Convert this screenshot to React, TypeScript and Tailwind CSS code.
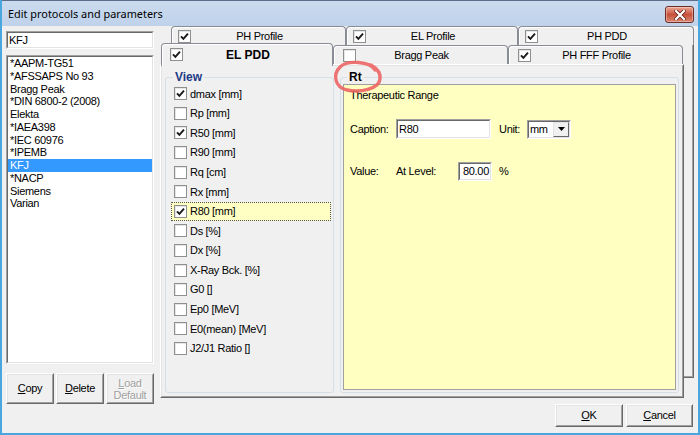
import React from 'react';

const F = "font-['Liberation_Sans',Arial,sans-serif]";

const Tick = () => (
  <svg width="9" height="9" viewBox="0 0 9 9" className="block">
    <path d="M1 4.3 L3.4 6.9 L8 1.6" stroke="#1a1a1a" strokeWidth="1.9" fill="none" />
  </svg>
);

function Box({ checked }: { checked?: boolean }) {
  return (
    <span className="w-[13px] h-[13px] shrink-0 border border-[#8e8f8f] bg-white flex items-center justify-center shadow-[inset_1px_1px_0_#e6e6e6]">
      {checked ? <Tick /> : null}
    </span>
  );
}

function Sunken({ className = '', inner = '', children }: { className?: string; inner?: string; children?: React.ReactNode }) {
  return (
    <div className={`border border-t-[#a0a0a0] border-l-[#a0a0a0] border-b-white border-r-white ${className}`}>
      <div className={`h-full w-full border border-t-[#696969] border-l-[#696969] border-b-[#e3e3e3] border-r-[#e3e3e3] bg-white ${inner}`}>{children}</div>
    </div>
  );
}

function Btn({ className = '', children }: { className?: string; children?: React.ReactNode }) {
  return (
    <div className={`border border-t-white border-l-white border-b-[#696969] border-r-[#696969] ${className}`}>
      <div className="h-full w-full border border-t-[#e3e3e3] border-l-[#e3e3e3] border-b-[#a0a0a0] border-r-[#a0a0a0] bg-[#f0f0f0] flex flex-col items-center justify-center">
        {children}
      </div>
    </div>
  );
}

function BackTab({ label, checked, w }: { label: string; checked?: boolean; w: string }) {
  return (
    <div className={`${w} h-[19px] border border-b-0 border-[#898c95] rounded-t-[4px] bg-[#f0f0f0] shadow-[inset_1px_1px_0_#ffffff] flex items-center`}>
      <span className="ml-[6px]"><Box checked={checked} /></span>
      <span className="flex-1 text-center">{label}</span>
      <span className="w-[17px] shrink-0" />
    </div>
  );
}

function FrontTab({ label, checked, w }: { label: string; checked?: boolean; w: string }) {
  return (
    <div className={`${w} h-[19px] border border-b-0 border-[#898c95] rounded-t-[4px] bg-[#f0f0f0] shadow-[inset_1px_1px_0_#ffffff] flex items-center`}>
      <span className="ml-[9px]"><Box checked={checked} /></span>
      <span className="flex-1 text-center">{label}</span>
      <span className="w-[20px] shrink-0" />
    </div>
  );
}

const listItems = [
  '*AAPM-TG51',
  '*AFSSAPS No 93',
  'Bragg Peak',
  '*DIN 6800-2 (2008)',
  'Elekta',
  '*IAEA398',
  '*IEC 60976',
  '*IPEMB',
  'KFJ',
  '*NACP',
  'Siemens',
  'Varian',
];

const checks: [string, boolean][] = [
  ['dmax [mm]', true],
  ['Rp [mm]', false],
  ['R50 [mm]', true],
  ['R90 [mm]', false],
  ['Rq [cm]', false],
  ['Rx [mm]', false],
  ['R80 [mm]', true],
  ['Ds [%]', false],
  ['Dx [%]', false],
  ['X-Ray Bck. [%]', false],
  ['G0 []', false],
  ['Ep0 [MeV]', false],
  ['E0(mean) [MeV]', false],
  ['J2/J1 Ratio []', false],
];

export default function App() {
  return (
    <div className={`relative w-[700px] h-[435px] flex flex-col bg-[#f0f0f0] ${F} text-[11px] tracking-[-0.3px] text-black border-l-2 border-r-2 border-b-2 border-l-[#4aa6de] border-r-[#4aa6de] border-b-[#4aa6de] overflow-hidden`}>
      {/* Title bar */}
      <div className="h-[26px] shrink-0 -mx-[2px] flex items-start bg-gradient-to-b from-[#cbdbef] to-[#bfd2ea] border-t border-l border-[#5b6f8a]">
        <div className="flex-1 pl-[7px] pt-[5px] font-['Noto_Sans',sans-serif] text-[10.9px] tracking-normal leading-[16px] text-black">
          Edit protocols and parameters
        </div>
        <div className="mt-[5px] mr-[6px] w-[29px] h-[17px] rounded-[3px] border border-[#6e2c22] bg-gradient-to-b from-[#e9a897] via-[#c7503b] to-[#d98570] flex items-center justify-center shadow-[inset_0_0_0_1px_rgba(255,255,255,0.35)]">
          <svg width="12" height="10" viewBox="0 0 12 10">
            <path d="M2 1 L10 9 M10 1 L2 9" stroke="#5a1d14" strokeWidth="3.6" strokeLinecap="square" />
            <path d="M2 1 L10 9 M10 1 L2 9" stroke="#ffffff" strokeWidth="2.2" strokeLinecap="square" />
          </svg>
        </div>
      </div>

      {/* Client */}
      <div className="flex-1 flex">
        {/* Left column */}
        <div className="ml-[4px] w-[148px] flex flex-col">
          <Sunken className="mt-[5px] h-[18px]" inner="flex items-center pl-[1px] leading-[13px]">
            KFJ
          </Sunken>
          <Sunken className="mt-[6px] h-[309px]">
            <div className="flex flex-col">
              {listItems.map((it) => (
                <div
                  key={it}
                  className={`h-[12.75px] leading-[13px] pl-[2px] whitespace-nowrap ${it === 'KFJ' ? 'bg-[#3399ff] text-white' : ''}`}
                >
                  {it}
                </div>
              ))}
            </div>
          </Sunken>
          <div className="mt-[9px] flex gap-[2px]">
            <Btn className="w-[48px] h-[31px]">
              <span><span className="underline">C</span>opy</span>
            </Btn>
            <Btn className="w-[48px] h-[31px]">
              <span><span className="underline">D</span>elete</span>
            </Btn>
            <Btn className="w-[48px] h-[31px]">
              <span className="text-[#a0a0a0] leading-[12px] text-center [text-shadow:1px_1px_0_#ffffff]">
                <span className="underline">L</span>oad
                <br />
                Default
              </span>
            </Btn>
          </div>
        </div>

        {/* Right area */}
        <div className="ml-[6px] w-[534px] flex flex-col">
          {/* back row */}
          <div className="pl-[11px] flex">
            <BackTab label="PH Profile" checked w="w-[175px]" />
            <BackTab label="EL Profile" checked w="w-[172px]" />
            <BackTab label="PH PDD" checked w="w-[176px]" />
          </div>
          <div className="flex">
            <div className="w-[524px] flex flex-col">
              {/* front row */}
              <div className="pl-[1px] flex items-end h-[19px]">
                <div className="relative z-10 w-[172px] h-[23px] -mb-[2px] border border-b-0 border-[#898c95] rounded-t-[4px] bg-[#f0f0f0] shadow-[inset_1px_1px_0_#ffffff] flex items-start pt-[4px]">
                  <span className="ml-[8px]"><Box checked /></span>
                  <span className="flex-1 text-center text-[12px] font-bold tracking-normal leading-[14px]">EL PDD</span>
                  <span className="w-[19px] shrink-0" />
                </div>
                <FrontTab label="Bragg Peak" w="w-[175px]" />
                <FrontTab label="PH FFF Profile" checked w="w-[175px]" />
              </div>
              {/* panel */}
              <div className="h-[334px] border border-t-white border-l-white border-b-[#696969] border-r-[#696969]">
                <div className="h-full border border-t-[#e3e3e3] border-l-[#e3e3e3] border-b-[#a0a0a0] border-r-[#a0a0a0] flex pt-[4px] pb-[3px] pl-[3px] pr-[3px] gap-[6px]">
                  <fieldset className="w-[169px] min-w-0 border border-[#d5dfe5] rounded-[3px]">
                    <legend className="ml-[7px] px-[2px] text-[12px] font-bold tracking-normal leading-[14px] text-[#1d3a86]">View</legend>
                    <div className="flex flex-col">
                      {checks.map(([label, c]) => (
                        <div
                          key={label}
                          className={`ml-[5px] w-[160px] h-[19.6px] flex items-center pl-[3px] gap-[3px] whitespace-nowrap ${label === 'R80 [mm]' ? 'bg-[#ffffc4] outline-1 outline-dotted -outline-offset-1 outline-[#555555]' : ''}`}
                        >
                          <Box checked={c} />
                          <span>{label}</span>
                        </div>
                      ))}
                    </div>
                  </fieldset>
                  <fieldset className="flex-1 min-w-0 border border-[#d5dfe5] rounded-[3px] flex flex-col">
                    <legend className="ml-[6px] px-[2px] text-[12px] font-bold tracking-normal leading-[14px] text-black">Rt</legend>
                    <div className="mx-[2px] mb-[2px] flex-1 border border-[#a0a0a0] bg-[#ffffc2] flex flex-col pl-[6px] h-[306px]">
                      <div className="pt-[4px] leading-[13px]">Therapeutic Range</div>
                      <div className="mt-[17px] h-[20px] flex items-center">
                        <span className="w-[46px]">Caption:</span>
                        <Sunken className="w-[95px] h-[20px]" inner="flex items-center pl-[1px]">R80</Sunken>
                        <span className="ml-[8px] w-[28px]">Unit:</span>
                        <Sunken className="w-[44px] h-[19px]" inner="flex items-stretch">
                          <span className="flex-1 flex items-center pl-[1px]">mm</span>
                          <div className="w-[16px] border border-t-[#e3e3e3] border-l-[#e3e3e3] border-b-[#696969] border-r-[#696969] bg-[#f0f0f0] flex items-center justify-center">
                            <svg width="7" height="4" viewBox="0 0 7 4"><path d="M0 0 H7 L3.5 4 Z" fill="#000" /></svg>
                          </div>
                        </Sunken>
                      </div>
                      <div className="mt-[23px] h-[19px] flex items-center">
                        <span className="w-[46px]">Value:</span>
                        <span className="w-[62px]">At Level:</span>
                        <Sunken className="w-[34px] h-[19px]" inner="flex items-center justify-end pr-[1px]">80.00</Sunken>
                        <span className="ml-[7px]">%</span>
                      </div>
                    </div>
                  </fieldset>
                </div>
              </div>
            </div>
            {/* right strip of back row */}
            <div className="w-[10px] h-[333px] border-r border-b border-[#696969] shadow-[inset_-1px_-1px_0_#a0a0a0]" />
          </div>
          {/* OK / Cancel */}
          <div className="mt-[6px] pr-[1px] flex justify-end gap-[3px]">
            <Btn className="w-[68px] h-[23px]">
              <span><span className="underline">O</span>K</span>
            </Btn>
            <Btn className="w-[67px] h-[23px]">
              <span><span className="underline">C</span>ancel</span>
            </Btn>
          </div>
        </div>
      </div>

      {/* Red hand-drawn annotation */}
      <svg className="absolute left-0 top-0 pointer-events-none" width="700" height="435" viewBox="0 0 700 435">
        <path
          d="M373 70 C368 61 345 60 338 67 C331 74 332 87 345 90 C358 93 377 89 378 79 C379 73 376 69 369 65"
          stroke="#ec6464"
          strokeOpacity="0.9"
          strokeWidth="3.4"
          fill="none"
          strokeLinecap="round"
        />
      </svg>
    </div>
  );
}
